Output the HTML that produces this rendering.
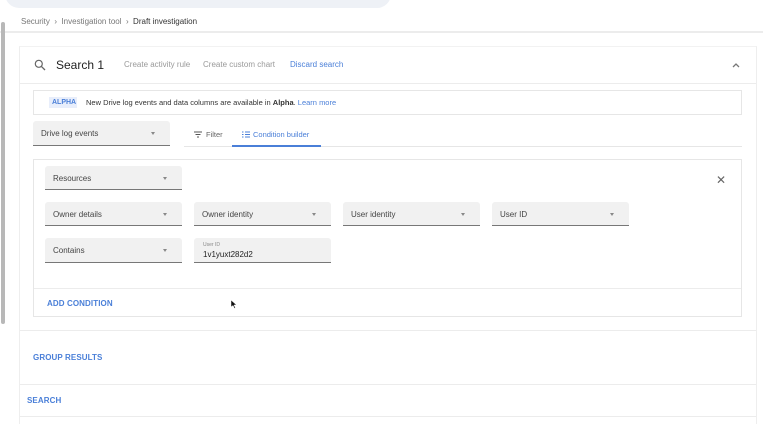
<!DOCTYPE html>
<html><head><style>
*{box-sizing:border-box;margin:0;padding:0}
html,body{width:763px;height:424px;overflow:hidden}
body{background:#fff;font-family:"Liberation Sans",Arial,sans-serif;position:relative;color:#3c4043}
.a{position:absolute}
.dd{position:absolute;background:#f1f1f1;border-bottom:1.5px solid #777;border-radius:3px 3px 0 0;height:24px;font-size:8px;color:#444;padding:8px 0 0 8px}
.dd:after{content:"";position:absolute;right:15px;top:11px;border:2.5px solid transparent;border-top:3px solid #888}
.blue{color:#4a7fd8}
.lnk{font-size:8px;font-weight:bold;color:#4a7fd8;letter-spacing:0.1px}
</style></head><body>
<div class="a" style="left:5px;top:-20px;width:386px;height:28px;background:#eef1f6;border-radius:14px"></div>
<div class="a" style="left:0;top:31px;width:763px;height:2px;background:#ececec"></div>
<div class="a" style="left:1px;top:22px;width:4px;height:302px;background:#b8b8b8;border-radius:2px"></div>
<div class="a" style="left:21px;top:17px;font-size:8px;color:#777">Security &nbsp;›&nbsp; Investigation tool &nbsp;›&nbsp; <span style="color:#333">Draft investigation</span></div>

<div class="a" style="left:19px;top:46px;width:738px;height:390px;border:1px solid #eee;border-top-color:#f2f2f2"></div>
<svg class="a" style="left:34px;top:59px" width="12" height="12" viewBox="0 0 12 12"><circle cx="4.8" cy="4.8" r="3.5" fill="none" stroke="#666" stroke-width="1.2"/><path d="M7.4 7.4L11 11" stroke="#666" stroke-width="1.3"/></svg>
<div class="a" style="left:56px;top:58px;font-size:12px;color:#222">Search 1</div>
<div class="a" style="left:124px;top:60px;font-size:8px;color:#999">Create activity rule</div>
<div class="a" style="left:203px;top:60px;font-size:8px;color:#999">Create custom chart</div>
<div class="a blue" style="left:290px;top:60px;font-size:8px">Discard search</div>
<svg class="a" style="left:732px;top:62px" width="8" height="6"><path d="M1 5L4 2L7 5" fill="none" stroke="#777" stroke-width="1.3"/></svg>
<div class="a" style="left:20px;top:83px;width:736px;height:1px;background:#ececec"></div>

<div class="a" style="left:33px;top:90px;width:709px;height:25px;border:1px solid #e6e6e6"></div>
<div class="a" style="left:49px;top:97px;width:28px;height:11px;background:#e8eefb;font-size:7px;font-weight:bold;color:#4a7fd8;padding:2px 0 0 3px">ALPHA</div>
<div class="a" style="left:86px;top:98px;font-size:7.5px;color:#333">New Drive log events and data columns are available in <b>Alpha</b>. <span class="blue">Learn more</span></div>

<div class="dd" style="left:33px;top:121px;width:137px;height:25px">Drive log events</div>
<div class="a" style="left:184px;top:146px;width:558px;height:1px;background:#e6e6e6"></div>
<svg class="a" style="left:194px;top:131px" width="9" height="7"><path d="M0 1H8M1.5 3.5H6.5M3 6H5" stroke="#555" stroke-width="1"/></svg>
<div class="a" style="left:206px;top:130px;font-size:7.5px;color:#666">Filter</div>
<svg class="a" style="left:242px;top:131px" width="8" height="7"><path d="M0 1H1.5M3 1H8M0 3.5H1.5M3 3.5H8M0 6H1.5M3 6H8" stroke="#4a7fd8" stroke-width="1"/></svg>
<div class="a blue" style="left:253px;top:130px;font-size:7.5px">Condition builder</div>
<div class="a" style="left:232px;top:145px;width:89px;height:2px;background:#4a7fd8"></div>

<div class="a" style="left:33px;top:159px;width:709px;height:158px;border:1px solid #e6e6e6"></div>
<div class="a" style="left:34px;top:288px;width:707px;height:1px;background:#ececec"></div>
<div class="dd" style="left:45px;top:166px;width:137px">Resources</div>
<div class="a" style="left:716px;top:174px;font-size:12px;color:#666;line-height:12px">✕</div>
<div class="dd" style="left:45px;top:202px;width:137px">Owner details</div>
<div class="dd" style="left:194px;top:202px;width:137px">Owner identity</div>
<div class="dd" style="left:343px;top:202px;width:137px">User identity</div>
<div class="dd" style="left:492px;top:202px;width:137px">User ID</div>
<div class="dd" style="left:45px;top:238px;width:137px;height:25px">Contains</div>
<div class="a" style="left:194px;top:238px;width:137px;height:25px;background:#f1f1f1;border-bottom:1.5px solid #777;border-radius:3px 3px 0 0"></div>
<div class="a" style="left:203px;top:242px;font-size:5px;color:#888">User ID</div>
<div class="a" style="left:203px;top:250px;font-size:8px;color:#222">1v1yuxt282d2</div>
<div class="a lnk" style="left:47px;top:299px">ADD CONDITION</div>
<svg class="a" style="left:230px;top:299px" width="7" height="10"><path d="M1 1V8L3 6.5L4.5 9.5L5.5 9L4 6H6.5Z" fill="#111" stroke="#fff" stroke-width="0.5"/></svg>

<div class="a" style="left:20px;top:330px;width:736px;height:1px;background:#ececec"></div>
<div class="a lnk" style="left:33px;top:353px">GROUP RESULTS</div>
<div class="a" style="left:20px;top:384px;width:736px;height:1px;background:#ececec"></div>
<div class="a lnk" style="left:27px;top:396px">SEARCH</div>
<div class="a" style="left:20px;top:416px;width:736px;height:1px;background:#ececec"></div>
</body></html>
